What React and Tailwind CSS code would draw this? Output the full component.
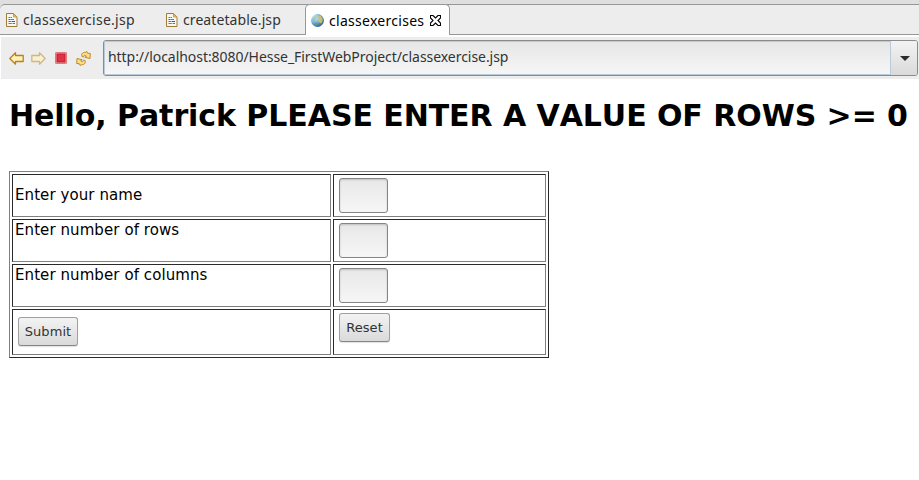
import React from "react";

const uiFont = "font-['Noto_Sans','Open_Sans',sans-serif]";

function PageIcon() {
  return (
    <svg width="12" height="14" viewBox="0 0 12 14" fill="none" className="shrink-0">
      <path d="M.5.5h7l3.500 3.500v9.500h-10.500z" fill="#f5f6f6" stroke="#9c7c38" />
      <path d="M7.500 1v3h3z" fill="#edc873" stroke="#c39536" strokeWidth=".8" />
      <path d="M2.500 4.500h2M5 6.500h3M2.500 10.500h3" stroke="#4f7fc6" />
      <path d="M2.500 6.500h2M6 8.500h3" stroke="#46559a" />
      <path d="M2.500 8.500h3M7 10.500h2" stroke="#d04450" />
      <path d="M5 4.500h1M5.500 10.500h1" stroke="#3d9c86" />
    </svg>
  );
}

function GlobeIcon() {
  return (
    <svg width="13" height="13" viewBox="0 0 13 13" className="shrink-0">
      <defs>
        <radialGradient id="sea" cx=".3" cy=".28" r=".8">
          <stop offset="0" stopColor="#e2f3fc" />
          <stop offset=".45" stopColor="#7ab8e2" />
          <stop offset="1" stopColor="#2a5c94" />
        </radialGradient>
      </defs>
      <circle cx="6.500" cy="6.500" r="6.400" fill="url(#sea)" />
      <path d="M1.300 5 3 2.500 5 2l1 1.500-1.500 2-.5 2-1.500 1z" fill="#8db794" opacity=".6" />
      <path d="m7 2.500 2-1 2.300 2.300.4 3-1.500 2.700-1.700-1-1.700-1.500.2-2 1-1z" fill="#dcc45c" opacity=".85" />
      <path d="m4 8.500 2 .7.500 1.300-1 1.500-1.700-1z" fill="#5f9f60" opacity=".8" />
    </svg>
  );
}

function CloseIcon() {
  return (
    <svg width="11" height="11" viewBox="0 0 11 11" className="shrink-0">
      <path
        d="M.5.5h2.500l2.500 2.500 2.500-2.500h2.500v2.500l-2.500 2.500 2.500 2.500v2.500h-2.500l-2.500-2.500-2.500 2.500h-2.500v-2.500l2.500-2.500-2.500-2.500z"
        fill="#fff"
        stroke="#000"
        strokeWidth="1.100"
      />
    </svg>
  );
}

function Arrow({ flipped, faded }) {
  return (
    <svg width="15" height="13" viewBox="0 0 15 13" className={faded ? "shrink-0 opacity-50" : "shrink-0"}>
      <path
        d="M.8 6.500 6.500.8v2.700h7.700v6h-7.700v2.700z"
        transform={flipped ? "matrix(-1 0 0 1 15 0)" : undefined}
        fill="#fff3bd"
        stroke="#c08010"
        strokeWidth="1.300"
        strokeLinejoin="round"
      />
    </svg>
  );
}

function StopIcon() {
  return (
    <svg width="12" height="12" viewBox="0 0 12 12" className="shrink-0">
      <rect x=".5" y=".5" width="11" height="11" rx=".5" fill="#f4b0b1" stroke="#dc7c80" />
      <rect x="2" y="2" width="8" height="8" fill="#e03242" stroke="#c2182a" />
    </svg>
  );
}

function RefreshIcon() {
  return (
    <svg width="15" height="15" viewBox="0 0 15 15" className="shrink-0">
      <g fill="#ffe080" stroke="#bb7c18" strokeWidth=".9" strokeLinejoin="round">
        <path d="M6.200 5.800C4.800 3.500 6.500 1 9.300 1.400L10.800.5 11.500 2.200 14.300 2.500 14 7.500 9 6.300 10.300 5C9 3.700 7.500 4.300 7.700 5.800z" />
        <path d="M8.800 9.200c1.400 2.300-.3 4.800-3.100 4.400L4.200 14.500 3.500 12.800.7 12.500 1 7.500 6 8.700 4.700 10C6 11.300 7.500 10.700 7.300 9.200z" />
      </g>
    </svg>
  );
}

function Cell({ children, className = "" }) {
  return (
    <div className={`flex border border-t-[#2b2b2b] border-l-[#2b2b2b] border-r-[#808080] border-b-[#808080] ${className}`}>
      {children}
    </div>
  );
}

function Field() {
  return (
    <input
      className="mt-[3px] ml-[5px] block h-[35px] w-[49px] rounded-[3px] border border-[#858585] bg-linear-to-b from-[#e8e8e8] to-[#f6f6f6] px-1 shadow-[inset_0_1px_2px_rgba(0,0,0,0.18)] outline-none"
    />
  );
}

function Button({ children, className }) {
  return (
    <button
      className={`block h-[29px] rounded-[3px] border border-[#a0a0a0] border-b-[#858585] bg-linear-to-b from-[#f3f3f3] to-[#dadada] text-center text-[13px] leading-[27px] text-[#333] shadow-[0_1px_1px_rgba(0,0,0,0.12)] ${className}`}
    >
      {children}
    </button>
  );
}

export default function App() {
  return (
    <div className="h-[480px] w-[919px] overflow-hidden bg-white font-['DejaVu_Sans',sans-serif] text-black">
      <div className="h-[35px] bg-[#dfdfdf] pt-1">
        <div className={`flex h-[31px] rounded-tl-[5px] border-t border-b border-[#979797] bg-[#ededed] text-[14px] text-[#333] ${uiFont}`}>
          <div className="flex w-[160px] items-center gap-[5px] pl-[6px]">
            <PageIcon />
            <span className="tracking-[0.26px]">classexercise.jsp</span>
          </div>
          <div className="flex w-[145px] items-center gap-[5px] pl-[6px]">
            <PageIcon />
            <span className="tracking-[0.08px]">createtable.jsp</span>
          </div>
          <div className="-mt-px flex h-[31px] w-[145px] items-center rounded-t-[5px] border border-b-0 border-[#979797] bg-white pl-[5px] text-black">
            <GlobeIcon />
            <span className="ml-[5px] w-[101px] tracking-[0.28px]">classexercises</span>
            <CloseIcon />
          </div>
        </div>
      </div>
      <div className="mt-[2px] ml-px flex h-[42px] items-start bg-[#ededed] pt-[3px]">
        <div className="flex h-[36px] w-[102px] items-center pl-[8px]">
          <Arrow />
          <div className="ml-[7px] flex"><Arrow flipped faded /></div>
          <div className="ml-[9px] flex"><StopIcon /></div>
          <div className="ml-[9px] flex"><RefreshIcon /></div>
        </div>
        <div className="flex h-[36px] w-[815px] overflow-hidden rounded-[3px] border border-[#8b8b8b]">
          <div className={`flex-1 border border-[#b9cadb] bg-linear-to-b from-[#e6e6e6] to-[#f6f6f6] pl-[3px] text-[14px] leading-[30px] tracking-[-0.05px] text-[#333] ${uiFont}`}>
            http://localhost:8080/Hesse_FirstWebProject/classexercise.jsp
          </div>
          <div className="flex w-[26px] items-center justify-center bg-linear-to-b from-[#f3f3f3] to-[#dadada] pl-[2px]">
            <svg width="10" height="5" viewBox="0 0 10 5"><path d="M0 0h10L5 5z" fill="#2b2b2b" /></svg>
          </div>
        </div>
      </div>
      <h1 className="mt-[19px] ml-[9px] h-[36px] text-[30px] leading-[36px] font-bold whitespace-nowrap [font-kerning:none] tracking-[-0.065px]">
        Hello, Patrick PLEASE ENTER A VALUE OF ROWS &gt;= 0
      </h1>
      <div className="mt-[37px] ml-[9px] grid h-[187px] w-[540px] grid-cols-[319px_213px] grid-rows-[43px_43px_43px_46px] gap-[2px] border border-t-[#808080] border-l-[#808080] border-r-[#2b2b2b] border-b-[#2b2b2b] p-[2px] text-[15px] leading-[18px] tracking-[0.08px]">
        <Cell className="items-center pb-[2px] pl-[2px]">Enter your name</Cell>
        <Cell><Field /></Cell>
        <Cell className="pt-[1px] pl-[2px]">Enter number of rows</Cell>
        <Cell><Field /></Cell>
        <Cell className="pt-[1px] pl-[2px]">Enter number of columns</Cell>
        <Cell><Field /></Cell>
        <Cell><Button className="mt-[7px] ml-[5px] w-[60px]">Submit</Button></Cell>
        <Cell><Button className="mt-[3px] ml-[5px] w-[51px]">Reset</Button></Cell>
      </div>
    </div>
  );
}
